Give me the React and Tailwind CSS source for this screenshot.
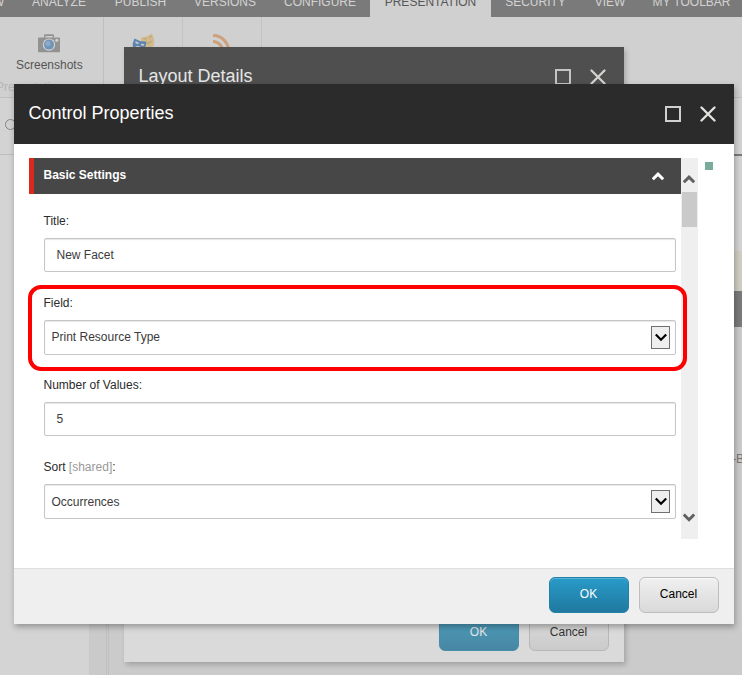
import clsx from 'clsx';

const TABS = [
  { label: 'REVIEW', width: 'w-[60px] -ml-[43px] pr-[14px]' },
  { label: 'ANALYZE', width: 'w-[84px]' },
  { label: 'PUBLISH', width: 'w-[79px]' },
  { label: 'VERSIONS', width: 'w-[90px]' },
  { label: 'CONFIGURE', width: 'w-[100px]' },
  { label: 'PRESENTATION', width: 'w-[121px]', active: true },
  { label: 'SECURITY', width: 'w-[89px]' },
  { label: 'VIEW', width: 'w-[60px]' },
  { label: 'MY TOOLBAR', width: 'w-[103px]' },
];

const FIELDS = [
  { label: 'Title', value: 'New Facet' },
  { label: 'Field', value: 'Print Resource Type', select: true, highlighted: true },
  { label: 'Number of Values', value: '5' },
  { label: 'Sort', value: 'Occurrences', select: true, shared: true },
];

function CameraIcon() {
  return (
    <svg width="22" height="19" viewBox="0 0 22 19">
      <path d="M6 3.5V1.5Q6 .3 7.2 .3H14.8Q16 .3 16 1.5V3.5H14.5V2H7.5V3.5Z" fill="#929292" />
      <path d="M1 3.5H21Q22 3.5 22 4.5V17.5Q22 18.3 21 18.3H1Q0 18.3 0 17.5V4.5Q0 3.5 1 3.5Z" fill="#929292" />
      <circle cx="11" cy="10.6" r="6.200" fill="#d0d0d0" />
      <circle cx="11" cy="10.6" r="5" fill="#7093b8" />
      <circle cx="10" cy="9.6" r="2.6" fill="#8fabc8" />
      <circle cx="18.8" cy="6.3" r="1.6" fill="#d0d0d0" />
    </svg>
  );
}

function MasksIcon() {
  return (
    <svg width="24" height="20" viewBox="0 0 24 20">
      <path d="M9 4.500Q15 4 20 .2L22 6Q23.500 14 17 16L9 12Z" fill="#d1bb8c" />
      <path d="M11.500 6.500L14.500 5.500M17 4.500L19.800 3M14.500 10.500Q18 10.500 19.500 8" fill="none" stroke="#b9a67e" strokeWidth="1.300" />
      <path d="M2.500 5.500Q8 9 14.500 8.500L13 16Q10 21 4 17Q-.5 14 1 9.500Z" fill="#5f86b0" />
      <path d="M3.500 9L6.500 10.500M9 11.500L12 12M3.500 14.500Q7 12.500 9.500 16" fill="none" stroke="#d0d0d0" strokeWidth="1.400" />
    </svg>
  );
}

function FeedIcon() {
  return (
    <svg width="18" height="18" viewBox="0 0 18 18" fill="none" stroke="#cda17d" strokeWidth="3">
      <path d="M0 1.500A15.500 15.500 0 0 1 15.500 18M0 7.500A9.500 9.500 0 0 1 9.500 18" />
    </svg>
  );
}

function Chevron({ up, thin, className }) {
  return (
    <svg width="12" height="9" viewBox="0 0 12 9" fill="none" stroke="currentColor" className={className}>
      <path d={up ? 'M.8 7.300L6 2.100L11.200 7.300' : 'M.8 1.500L6 6.700L11.200 1.500'} strokeWidth={thin ? 2.2 : 3} />
    </svg>
  );
}

function DialogHeader({ title }) {
  return (
    <div className="flex h-[60px] shrink-0 items-center bg-[#2b2b2b] pl-[14.5px] pr-[18px] text-white">
      <h2 className="flex-1 pb-[2px] text-[18px] leading-[22px]">{title}</h2>
      <div className="mr-[19px] h-4 w-4 border-2 border-[#d0d0d0]" />
      <svg width="16" height="16" viewBox="0 0 16 16" stroke="#e3e3e0" strokeWidth="2.300" strokeLinecap="round">
        <path d="M1.500 1.500L14.500 14.500M14.500 1.500L1.500 14.500" />
      </svg>
    </div>
  );
}

function DialogFooter() {
  return (
    <div className="flex h-14 shrink-0 justify-end gap-[10px] border-t border-[#dedede] bg-[#efefef] pr-[15px] pt-2">
      <button className="h-9 w-20 rounded-[6px] border border-[#2182a9] bg-linear-to-b from-[#289bc8] to-[#2079a0] pb-[2px] pr-px text-white shadow-[inset_0_1px_#55b2d6]">OK</button>
      <button className="h-9 w-20 rounded-[6px] border border-[#bdbdbd] bg-linear-to-b from-[#f0f0f0] to-[#d9d9d9] pb-[2px] pr-px text-black shadow-[inset_0_1px_#f8f8f8]">Cancel</button>
    </div>
  );
}

function Field({ field }) {
  return (
    <div className="relative h-[82px]">
      {field.highlighted && (
        <div className="absolute -left-4 -top-[8px] z-10 h-[86px] w-[659px] rounded-[13px] border-4 border-[#fe0000]" />
      )}
      <div className="-ml-[0.5px] h-[27px] pt-px leading-[18px] text-[#2b2b2b]">
        {field.label}
        {field.shared && <span className="text-[#999]"> [shared]</span>}:
      </div>
      <div
        className={clsx(
          'flex w-[632px] items-center justify-between rounded-[2px] border border-[#c6c6c6] bg-white text-[#3b3b3b] shadow-[inset_0_1px_1px_#e6e6e6]',
          field.select ? 'h-[35px] pl-[6.5px] pr-[5px]' : 'h-[34px] px-[11.5px]'
        )}
      >
        <span className={clsx(field.highlighted && 'pb-[2px]')}>{field.value}</span>
        {field.select && (
          <span className="flex h-[23px] w-[19px] items-center justify-center border border-[#707070] bg-[#efefef] text-black">
            <Chevron thin />
          </span>
        )}
      </div>
    </div>
  );
}

function Backdrop() {
  return (
    <div className="flex h-full flex-col">
      <div className="flex h-[17px] shrink-0 bg-[#7a7a7a]">
        {TABS.map((tab) => (
          <div
            key={tab.label}
            className={clsx('h-[17px] shrink-0 text-center leading-[4px]', tab.width, tab.active ? 'bg-[#d0d0d0] text-[#575757]' : 'text-[#d3d3d3]')}
          >
            {tab.label}
          </div>
        ))}
      </div>
      <div className="flex h-[81px] shrink-0 border-b border-[#c0c0c0] bg-[#d0d0d0]">
        <div className="flex w-[104px] flex-col border-r border-[#bfbfbf] pt-[17px] text-[#555]">
          <div className="pl-[38px]"><CameraIcon /></div>
          <div className="mt-[5px] pl-4 leading-[14px]">Screenshots</div>
          <div className="-ml-1 mt-[8px] leading-[14px] text-[#b5b5b5]">Presentation</div>
        </div>
        <div className="w-[79px] border-r border-[#c3c3c3] pl-[28px] pt-[16px]"><MasksIcon /></div>
        <div className="w-[79px] border-r border-[#c3c3c3] pl-[30px] pt-[17px]"><FeedIcon /></div>
      </div>
      <div className="h-[57px] shrink-0 border-b border-[#bdbdbd] bg-[#d3d3d3] pl-[5px] pt-[21px]">
        <div className="h-[11px] w-[11px] rounded-full border border-[#858585]" />
      </div>
      <div className="flex flex-1">
        <div className="w-[89px] bg-[#d4d4d4]" />
        <div className="w-[17px] bg-[#cacaca]" />
        <div className="w-[3px] border-x border-[#bebebe] bg-[#cccccc]" />
        <div className="flex-1 bg-[#cbcbcb]" />
        <div className="w-2 bg-[#cbcbcb] text-[#777]">
          <div className="-mt-px h-[97px] border-t-2 border-[#7a7a7a] bg-[#d4d4d4]" />
          <div className="h-[40px] bg-[#d1cec2]" />
          <div className="h-9 bg-[#7a7a7a]" />
          <div className="-ml-[2px] mt-[125px] whitespace-nowrap leading-[14px]">-Body</div>
        </div>
      </div>
    </div>
  );
}

export default function App() {
  return (
    <div className="relative h-[675px] w-[742px] overflow-hidden bg-[#cbcbcb] font-['Liberation_Sans',Arial,sans-serif] text-[12px]">
      <Backdrop />

      <div className="absolute left-[124px] top-[47px] flex h-[615px] w-[500px] flex-col bg-white shadow-[2px_3px_5px_rgba(0,0,0,0.2)]">
        <DialogHeader title="Layout Details" />
        <div className="flex-1" />
        <DialogFooter />
        {/* dims the parent dialog while the child is open */}
        <div className="absolute inset-0 bg-[#aaa]/[.29]" />
      </div>

      <div className="absolute left-[14px] top-[84px] flex h-[540px] w-[720px] flex-col bg-white shadow-[1px_3px_6px_rgba(0,0,0,0.3)]">
        <DialogHeader title="Control Properties" />
        <div className="flex flex-1 pl-[15px] pt-[14px]">
          <div className="h-[381px] w-[652px]">
            <div className="flex h-9 items-center justify-between border-l-[5px] border-[#dc291e] bg-[#474747] pl-[9.5px] pr-[17px] text-white">
              <span className="pb-[2px] font-bold">Basic Settings</span>
              <Chevron up className="mt-px" />
            </div>
            <div className="pl-[15px] pt-[17px]">
              {FIELDS.map((field) => (
                <Field key={field.label} field={field} />
              ))}
            </div>
          </div>
          <div className="flex h-[381px] w-[17px] flex-col bg-[#efefef] pl-px text-[#606060]">
            <div className="flex h-[34px] items-center pl-px pt-[9px]"><Chevron up /></div>
            <div className="h-[35px] w-[15px] bg-[#cacaca]" />
            <div className="mt-auto pb-[17px] pl-px"><Chevron /></div>
          </div>
          <div className="ml-[7px] mt-1 h-2 w-2 bg-[#7aaa9a]" />
        </div>
        <DialogFooter />
      </div>
    </div>
  );
}
